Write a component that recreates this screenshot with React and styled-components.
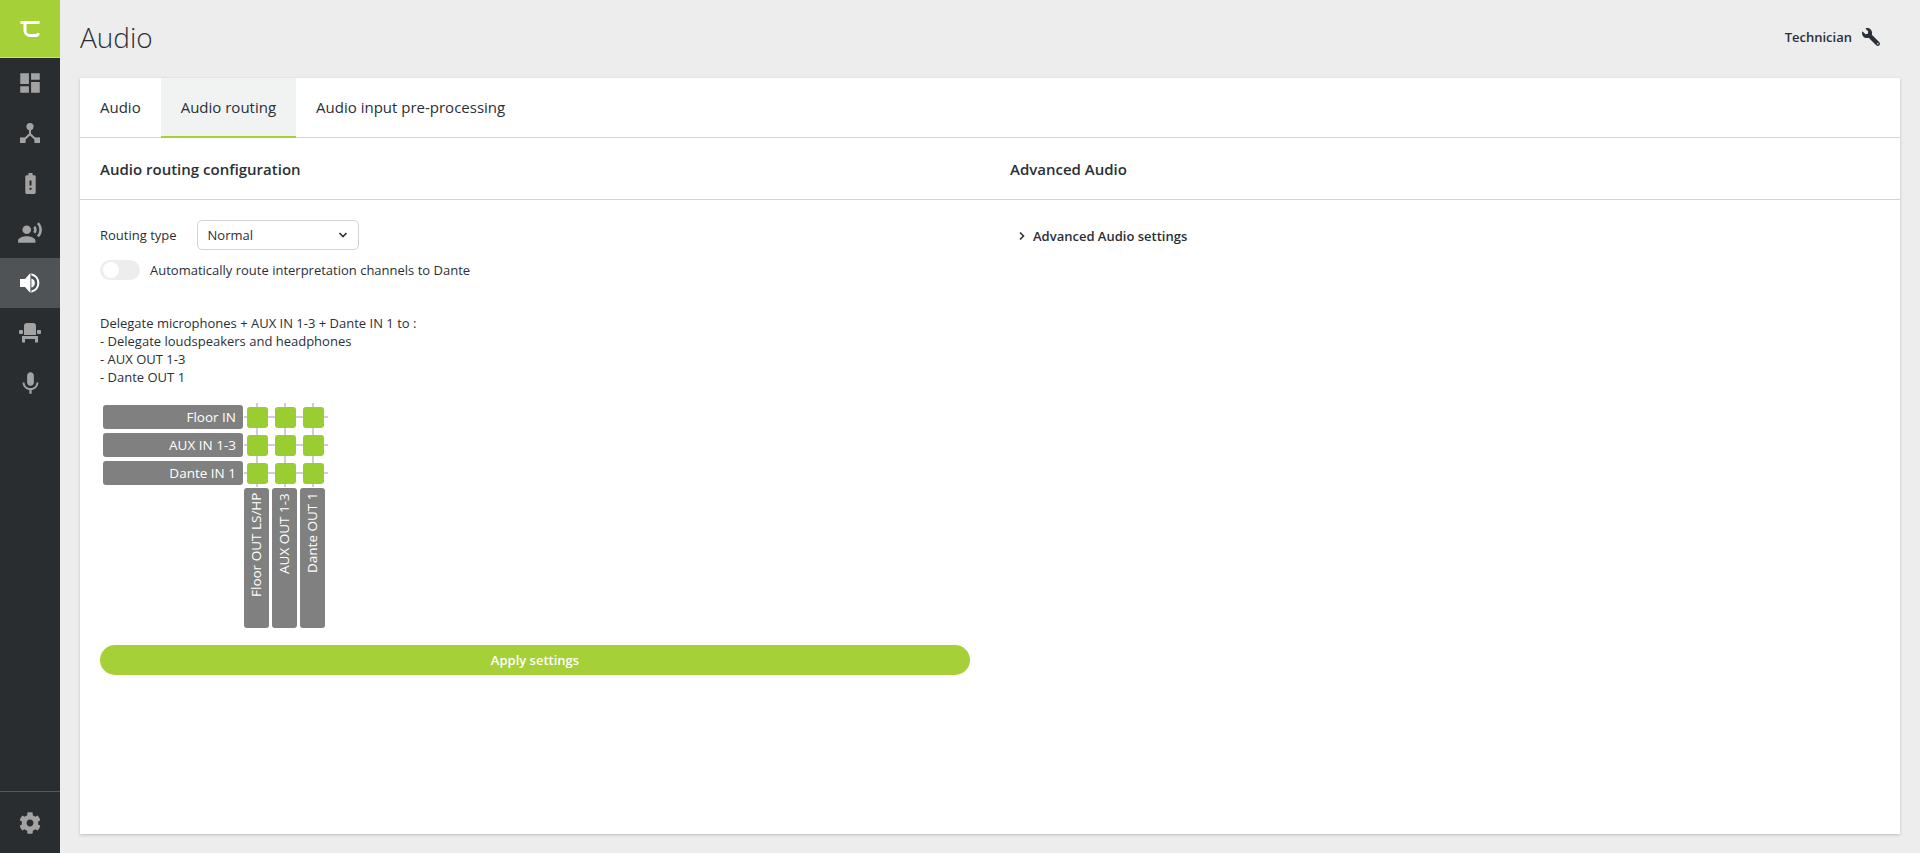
import React from 'react'
import styled, { createGlobalStyle } from 'styled-components'
import { MdDashboard, MdBatteryAlert, MdRecordVoiceOver, MdMic } from 'react-icons/md'
import { FaWrench, FaCog } from 'react-icons/fa'

const GlobalStyle = createGlobalStyle`
  html, body { margin: 0; padding: 0; height: 100%; }
  body {
    font-family: "Open Sans", "Liberation Sans", sans-serif;
    font-size: 13px;
    color: #2b3036;
    background: #ededed;
  }
  * { box-sizing: border-box; }
`

const Page = styled.div`
  display: flex;
  height: 853px;
  overflow: hidden;
`

const Sidebar = styled.nav`
  width: 60px;
  flex: none;
  display: flex;
  flex-direction: column;
  background: #292d30;
`

const Logo = styled.div`
  height: 58px;
  background: #a6d037;
  border-bottom: 1px solid #c9df8a;
  display: flex;
  align-items: center;
  justify-content: center;
`

const NavItem = styled.div`
  height: 50px;
  display: flex;
  align-items: center;
  justify-content: center;
  color: ${p => (p.$active ? '#fff' : '#a3a3a3')};
  background: ${p => (p.$active ? '#4f5356' : 'transparent')};
`

const SidebarFoot = styled.div`
  margin-top: auto;
  height: 62px;
  border-top: 1px solid #54585a;
  display: flex;
  align-items: center;
  justify-content: center;
  color: #a3a3a3;
`

const Main = styled.main`
  flex: 1;
  padding: 0 20px 19px;
  display: flex;
  flex-direction: column;
`

const Header = styled.header`
  height: 78px;
  flex: none;
  display: flex;
  align-items: center;
  justify-content: space-between;
`

const Title = styled.h1`
  margin: 0 0 5px;
  font-size: 28px;
  font-weight: 300;
`

const UserBox = styled.div`
  display: flex;
  align-items: center;
  gap: 10px;
  padding-right: 20px;
  margin-bottom: 4px;
  font-size: 13px;
  font-weight: 600;
`

const Wrench = styled(FaWrench)`
  transform: scaleX(-1);
`

const Card = styled.section`
  flex: 1;
  background: #fff;
  box-shadow: 0 1px 3px rgba(0, 0, 0, 0.2);
  display: flex;
  flex-direction: column;
`

const Tabs = styled.div`
  display: flex;
  height: 60px;
  flex: none;
  border-bottom: 1px solid #d4d4d4;
`

const Tab = styled.div`
  padding: 0 20px;
  height: 60px;
  display: flex;
  align-items: center;
  font-size: 15px;
  background: ${p => (p.$active ? '#f1f3f3' : 'transparent')};
  border-bottom: 2px solid ${p => (p.$active ? '#a6d037' : 'transparent')};
`

const Columns = styled.div`
  flex: 1;
  display: grid;
  grid-template-columns: 1fr 1fr;
`

const SectionHead = styled.h2`
  margin: 0;
  height: 62px;
  padding: 0 20px;
  display: flex;
  align-items: center;
  font-size: 15px;
  font-weight: 600;
  border-bottom: 1px solid #d4d4d4;
`

const SectionBody = styled.div`
  padding: 20px;
`

const Row = styled.div`
  display: flex;
  align-items: center;
  gap: 20px;
  height: 30px;
`

const SelectBox = styled.div`
  width: 162px;
  height: 30px;
  padding: 0 10px;
  border: 1px solid #d4d4d4;
  border-radius: 5px;
  display: flex;
  align-items: center;
  justify-content: space-between;
`

const ToggleRow = styled.div`
  display: flex;
  align-items: center;
  gap: 10px;
  margin-top: 10px;
  height: 20px;
`

const Toggle = styled.div`
  width: 40px;
  height: 20px;
  border-radius: 10px;
  background: #ededed;
  padding: 2px 3px;
`

const Knob = styled.div`
  width: 16px;
  height: 16px;
  border-radius: 50%;
  background: #fff;
`

const Description = styled.p`
  margin: 34px 0 19px;
  line-height: 18px;
  white-space: pre-line;
`

const Matrix = styled.div`
  display: grid;
  grid-template-columns: 141px repeat(3, 28px);
  grid-auto-rows: 28px;
  margin-left: 3px;
`

const InLabel = styled.div`
  width: 140px;
  height: 24px;
  padding-right: 7px;
  border-radius: 3px;
  background: #808080;
  color: #fff;
  font-size: 13.5px;
  display: flex;
  align-items: center;
  justify-content: flex-end;
`

const Node = styled.div`
  height: 28px;
  margin-top: -2px;
  padding: 4px 0 0 3px;
  background:
    linear-gradient(#cfcfcf, #cfcfcf) 0 13px / 100% 2px no-repeat,
    linear-gradient(#cfcfcf, #cfcfcf) 12px 0 / 2px 100% no-repeat;
`

const NodeFill = styled.div`
  width: 21px;
  height: 21px;
  border-radius: 3px;
  background: #9acd32;
`

const OutLabel = styled.div`
  grid-column: ${p => p.$col};
  grid-row: 4;
  width: 25px;
  height: 140px;
  margin-top: -1px;
  padding-bottom: 5px;
  border-radius: 3px;
  background: #808080;
  color: #fff;
  font-size: 13.5px;
  line-height: 25px;
  white-space: nowrap;
  writing-mode: vertical-rl;
  transform: rotate(180deg);
  text-align: right;
`

const ApplyButton = styled.button`
  display: block;
  width: 100%;
  height: 30px;
  margin-top: 128px;
  border: 0;
  border-radius: 15px;
  background: #a6d037;
  color: #fff;
  font: 600 13px "Open Sans", sans-serif;
`

const Expander = styled.div`
  display: flex;
  align-items: center;
  gap: 6px;
  height: 31px;
  padding: 1px 0 0 7px;
  font-weight: 600;
`

function LogoMark() {
  return (
    <svg width="20" height="18" viewBox="0 0 20 18" fill="none" stroke="#fff" strokeWidth="3">
      <path d="M0.5 2.5h19M5 2.5v8a5 5 0 0 0 5 5h6.5a1.5 1.5 0 0 0 1.5-1.5v-1" />
    </svg>
  )
}

function NetworkIcon() {
  return (
    <svg width="20" height="20" viewBox="0 0 20 20" fill="currentColor">
      <circle cx="10" cy="3.6" r="3.6" />
      <path d="M9 6h2v4.6l5.2 5-1.4 1.4L10 12.6 5.2 17l-1.4-1.4L9 10.6z" />
      <rect x="0" y="14.4" width="5.6" height="5.6" />
      <rect x="14.4" y="14.4" width="5.6" height="5.6" />
    </svg>
  )
}

function SpeakerIcon() {
  return (
    <svg width="20" height="20" viewBox="0 0 20 20" fill="currentColor">
      <path d="M0 6h5L10.4 0v20L5 14H0z" />
      <path d="M11.4 0.2a10 10 0 0 1 0 19.6v-2.4a7.6 7.6 0 0 0 0-14.8zM11.4 5.4a4.8 4.8 0 0 1 0 9.2z" />
    </svg>
  )
}

function SeatIcon() {
  return (
    <svg width="22" height="20" viewBox="0 0 22 20" fill="currentColor">
      <path d="M5 3a3 3 0 0 1 3-3h6a3 3 0 0 1 3 3v9H5z" />
      <rect x="0" y="7" width="4" height="4" rx="1" />
      <rect x="18" y="7" width="4" height="4" rx="1" />
      <path d="M3 13h16v6.5h-3V16H6v3.5H3z" />
    </svg>
  )
}

function Chevron({ down, size = 10 }) {
  return (
    <svg width={size} height={size} viewBox="0 0 10 10" fill="none" stroke="#2b3036" strokeWidth="1.6">
      <path d={down ? 'M1.5 3l3.5 3.5L8.5 3' : 'M3 1.5L6.5 5 3 8.5'} />
    </svg>
  )
}

const inputs = ['Floor IN', 'AUX IN 1-3', 'Dante IN 1']
const outputs = ['Floor OUT LS/HP', 'AUX OUT 1-3', 'Dante OUT 1']

export default function App() {
  return (
    <Page>
      <GlobalStyle />
      <Sidebar>
        <Logo><LogoMark /></Logo>
        <NavItem><MdDashboard size={26} /></NavItem>
        <NavItem><NetworkIcon /></NavItem>
        <NavItem><MdBatteryAlert size={25} /></NavItem>
        <NavItem><MdRecordVoiceOver size={26} /></NavItem>
        <NavItem $active><SpeakerIcon /></NavItem>
        <NavItem><SeatIcon /></NavItem>
        <NavItem><MdMic size={27} /></NavItem>
        <SidebarFoot><FaCog size={22} /></SidebarFoot>
      </Sidebar>
      <Main>
        <Header>
          <Title>Audio</Title>
          <UserBox>Technician <Wrench size={18} /></UserBox>
        </Header>
        <Card>
          <Tabs>
            <Tab>Audio</Tab>
            <Tab $active>Audio routing</Tab>
            <Tab>Audio input pre-processing</Tab>
          </Tabs>
          <Columns>
            <div>
              <SectionHead>Audio routing configuration</SectionHead>
              <SectionBody>
                <Row>
                  Routing type
                  <SelectBox>Normal <Chevron down /></SelectBox>
                </Row>
                <ToggleRow>
                  <Toggle><Knob /></Toggle>
                  Automatically route interpretation channels to Dante
                </ToggleRow>
                <Description>
                  {'Delegate microphones + AUX IN 1-3 + Dante IN 1 to :\n- Delegate loudspeakers and headphones\n- AUX OUT 1-3\n- Dante OUT 1'}
                </Description>
                <Matrix>
                  {inputs.map(name => (
                    <React.Fragment key={name}>
                      <InLabel>{name}</InLabel>
                      {outputs.map(out => <Node key={out}><NodeFill /></Node>)}
                    </React.Fragment>
                  ))}
                  {outputs.map((out, i) => <OutLabel key={out} $col={i + 2}>{out}</OutLabel>)}
                </Matrix>
                <ApplyButton>Apply settings</ApplyButton>
              </SectionBody>
            </div>
            <div>
              <SectionHead>Advanced Audio</SectionHead>
              <SectionBody>
                <Expander><Chevron />Advanced Audio settings</Expander>
              </SectionBody>
            </div>
          </Columns>
        </Card>
      </Main>
    </Page>
  )
}
